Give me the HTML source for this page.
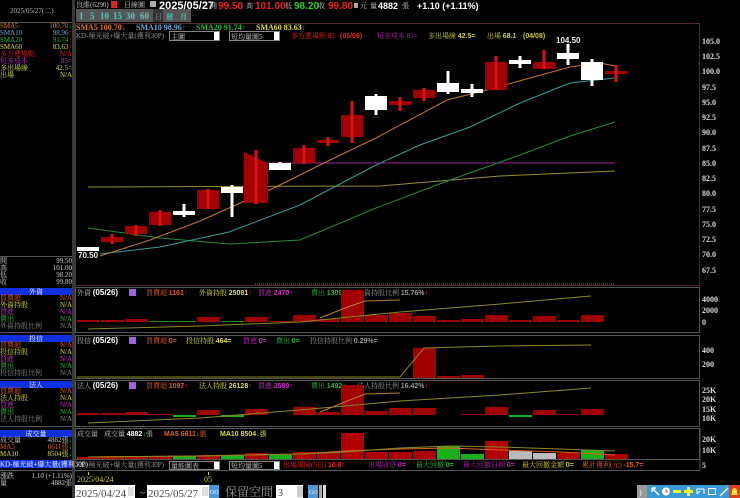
<!DOCTYPE html>
<html><head><meta charset="utf-8"><style>
html,body{margin:0;padding:0;background:#000;width:740px;height:498px;overflow:hidden}
svg{display:block}
text{font-family:"Liberation Serif","Noto Serif CJK SC","Noto Sans CJK TC",serif}
.b{font-family:"Liberation Sans","Noto Sans CJK TC",sans-serif;font-weight:bold}
</style></head><body>
<svg width="740" height="498" viewBox="0 0 740 498" xmlns="http://www.w3.org/2000/svg">
<rect width="740" height="498" fill="#000"/>
<rect x="72" y="0" width="3" height="498" fill="#3a3a3a"/>
<line x1="0" y1="22.5" x2="72" y2="22.5" stroke="#555"/>
<text x="10" y="13" font-size="7" fill="#bbb">2025/05/27(二)</text>
<g font-size="7">
<text x="0" y="28" fill="#e07a20">SMA5</text><text x="72" y="28" fill="#e07a20" text-anchor="end">100.70<tspan fill="#2c2">↓</tspan></text>
<text x="0" y="35" fill="#6ac">SMA10</text><text x="72" y="35" fill="#6ac" text-anchor="end">98.96<tspan fill="#f22">↑</tspan></text>
<text x="0" y="42" fill="#2b4">SMA20</text><text x="72" y="42" fill="#2b4" text-anchor="end">91.74<tspan fill="#f22">↑</tspan></text>
<text x="0" y="49" fill="#dd3">SMA60</text><text x="72" y="49" fill="#dd3" text-anchor="end">83.63<tspan fill="#f22">↑</tspan></text>
<text x="0" y="56" fill="#e22">多方進場點</text><text x="72" y="56" fill="#e22" text-anchor="end">N/A</text>
<text x="0" y="63" fill="#c3c">短多成本</text><text x="72" y="63" fill="#c3c" text-anchor="end">85=</text>
<text x="0" y="70" fill="#dd3">多出場線</text><text x="72" y="70" fill="#dd3" text-anchor="end">42.5=</text>
<text x="0" y="77" fill="#dd3">出場</text><text x="72" y="77" fill="#dd3" text-anchor="end">N/A</text>
</g>
<line x1="0" y1="256.5" x2="72" y2="256.5" stroke="#555"/>
<g font-size="7" fill="#ccc">
<text x="0" y="263">開</text><text x="72" y="263" text-anchor="end">99.50</text>
<text x="0" y="270">高</text><text x="72" y="270" text-anchor="end">101.00</text>
<text x="0" y="277">低</text><text x="72" y="277" text-anchor="end">98.20</text>
<text x="0" y="284">收</text><text x="72" y="284" text-anchor="end">99.80</text>
</g>
<g font-size="7">
<rect x="0" y="288" width="72" height="7" fill="#1030e0"/><text x="36" y="294" fill="#fff" text-anchor="middle">外資</text>
<text x="0" y="300" fill="#e06020">買賣超</text><text x="72" y="300" fill="#e06020" text-anchor="end">N/A</text>
<text x="0" y="307" fill="#dd3">外資持股</text><text x="72" y="307" fill="#dd3" text-anchor="end">N/A</text>
<text x="0" y="314" fill="#c3c">買進</text><text x="72" y="314" fill="#c3c" text-anchor="end">N/A</text>
<text x="0" y="321" fill="#2b4">賣出</text><text x="72" y="321" fill="#2b4" text-anchor="end">N/A</text>
<text x="0" y="328" fill="#888">外資持股比例</text><text x="72" y="328" fill="#888" text-anchor="end">N/A</text>
<line x1="0" y1="332.5" x2="72" y2="332.5" stroke="#555"/>
<rect x="0" y="335" width="72" height="7" fill="#1030e0"/><text x="36" y="341" fill="#fff" text-anchor="middle">投信</text>
<text x="0" y="347" fill="#e06020">買賣超</text><text x="72" y="347" fill="#e06020" text-anchor="end">N/A</text>
<text x="0" y="354" fill="#dd3">投信持股</text><text x="72" y="354" fill="#dd3" text-anchor="end">N/A</text>
<text x="0" y="361" fill="#c3c">買進</text><text x="72" y="361" fill="#c3c" text-anchor="end">N/A</text>
<text x="0" y="368" fill="#2b4">賣出</text><text x="72" y="368" fill="#2b4" text-anchor="end">N/A</text>
<text x="0" y="375" fill="#888">投信持股比例</text><text x="72" y="375" fill="#888" text-anchor="end">N/A</text>
<line x1="0" y1="379.5" x2="72" y2="379.5" stroke="#555"/>
<rect x="0" y="381" width="72" height="7" fill="#1030e0"/><text x="36" y="387" fill="#fff" text-anchor="middle">法人</text>
<text x="0" y="393" fill="#e06020">買賣超</text><text x="72" y="393" fill="#e06020" text-anchor="end">N/A</text>
<text x="0" y="400" fill="#dd3">法人持股</text><text x="72" y="400" fill="#dd3" text-anchor="end">N/A</text>
<text x="0" y="407" fill="#c3c">買進</text><text x="72" y="407" fill="#c3c" text-anchor="end">N/A</text>
<text x="0" y="414" fill="#2b4">賣出</text><text x="72" y="414" fill="#2b4" text-anchor="end">N/A</text>
<text x="0" y="421" fill="#888">法人持股比例</text><text x="72" y="421" fill="#888" text-anchor="end">N/A</text>
<line x1="0" y1="426.5" x2="72" y2="426.5" stroke="#555"/>
<rect x="0" y="430" width="72" height="7" fill="#1030e0"/><text x="36" y="436" fill="#fff" text-anchor="middle">成交量</text>
<text x="0" y="442" fill="#ccc">成交量</text><text x="72" y="442" fill="#ccc" text-anchor="end">4882張<tspan fill="#2c2">↓</tspan></text>
<text x="0" y="449" fill="#e06020">MA5</text><text x="72" y="449" fill="#e06020" text-anchor="end">6611張<tspan fill="#2c2">↓</tspan></text>
<text x="0" y="456" fill="#dd3">MA10</text><text x="72" y="456" fill="#dd3" text-anchor="end">8504張<tspan fill="#2c2">↓</tspan></text>
<rect x="0" y="460" width="72" height="8" fill="#1030e0"/><text x="0" y="466.5" fill="#fff">KD-極光破+爆大量(獲利30P)</text>
<line x1="0" y1="470.5" x2="72" y2="470.5" stroke="#555"/>
<text x="0" y="478" fill="#ccc">漲跌</text><text x="72" y="478" fill="#ccc" text-anchor="end">1.10 (+1.11%)</text>
<text x="0" y="485" fill="#ccc">量</text><text x="72" y="485" fill="#ccc" text-anchor="end">4882張</text>
</g>

<g font-size="7" fill="#ccc">
<text x="76" y="7">良維(6290)</text>
<rect x="111" y="1" width="6" height="7" fill="#d22"/>
<text x="124" y="7">日線圖</text>
<rect x="150" y="1" width="6" height="6" fill="#aaa"/>
<text x="159" y="9" class="b" font-size="11" fill="#fff">2025/05/27</text>
<text x="210" y="8">開</text><text x="218" y="9" class="b" font-size="10" fill="#e22">99.50</text>
<text x="246" y="8">高</text><text x="255" y="9" class="b" font-size="10" fill="#e22">101.00</text>
<text x="285" y="8">低</text><text x="294" y="9" class="b" font-size="10" fill="#2c2">98.20</text>
<text x="318" y="8">收</text><text x="328" y="9" class="b" font-size="10" fill="#e22">99.80</text>
<rect x="354" y="3" width="4" height="5" fill="#aaa"/><text x="360" y="8">元</text>
<text x="370" y="8">量</text><text x="378" y="9" class="b" font-size="9" fill="#fff">4882</text><text x="402" y="8">張</text>
<text x="417" y="9" class="b" font-size="9" fill="#fff">+1.10 (+1.11%)</text>
</g>
<g font-size="9" class="b">
<rect x="76" y="9" width="115" height="13" fill="#555"/>
<g fill="#4cc">
<text x="79" y="19">1</text><text x="90" y="19">5</text><text x="100" y="19">10</text><text x="113" y="19">15</text><text x="126" y="19">30</text><text x="140" y="19">60</text>
</g>
<rect x="153" y="9" width="10" height="13" fill="#333"/><text x="155" y="19" fill="#777" font-size="7">日</text>
<text x="166" y="19" fill="#4cc" font-size="7">週</text><text x="180" y="19" fill="#4cc" font-size="7">月</text>
</g>

<rect x="75.5" y="23.5" width="624" height="262" fill="none" stroke="#5a2a2a"/>
<g font-size="8" class="b">
<text x="76" y="30" fill="#e07a20">SMA5 100.70<tspan fill="#2c2">↓</tspan></text>
<text x="136" y="30" fill="#6ac">SMA10 98.96<tspan fill="#f22">↑</tspan></text>
<text x="196" y="30" fill="#2b4">SMA20 91.74<tspan fill="#f22">↑</tspan></text>
<text x="256" y="30" fill="#dd3">SMA60 83.63<tspan fill="#f22">↑</tspan></text>
</g>
<g font-size="7">
<text x="76" y="38" fill="#999">KD-極光破+爆大量(獲利30P)</text>
<rect x="169.5" y="31.5" width="50" height="9" fill="#000" stroke="#888"/><text x="171" y="39" fill="#ccc">主圖</text>
<rect x="214" y="32" width="5" height="8" fill="#fff"/>
<rect x="229.5" y="31.5" width="50" height="9" fill="#000" stroke="#888"/><text x="231" y="39" fill="#ccc">短均量圖5</text>
<rect x="274" y="32" width="5" height="8" fill="#fff"/>
<text x="291" y="38" fill="#e22">多方進場點 85</text>
<text x="340" y="38" fill="#e22" class="b">(05/06)</text>
<text x="377" y="38" fill="#b2b">短多成本 85=</text>
<text x="428" y="38" fill="#cc3">多出場線 <tspan class="b">42.5=</tspan></text>
<text x="487" y="38" fill="#cc3">出場 <tspan class="b">68.1</tspan></text>
<text x="523" y="38" fill="#cc3" class="b">(04/08)</text>
<text x="556" y="43" fill="#eee" class="b" font-size="8">104.50</text>
<text x="78" y="258" fill="#eee" class="b" font-size="8">70.50</text>
</g>
<g font-size="8" class="b" fill="#ddd">
<text x="702" y="44">105.0</text><text x="702" y="59">102.5</text><text x="702" y="74">100.0</text><text x="702" y="90">97.5</text>
<text x="702" y="105">95.0</text><text x="702" y="120">92.5</text><text x="702" y="135">90.0</text><text x="702" y="151">87.5</text>
<text x="702" y="166">85.0</text><text x="702" y="181">82.5</text><text x="702" y="196">80.0</text><text x="702" y="212">77.5</text>
<text x="702" y="227">75.0</text><text x="702" y="242">72.5</text><text x="702" y="257">70.0</text><text x="702" y="273">67.5</text>
</g>
<g fill="none" stroke-width="1">
<polyline stroke="#99902a" points="88,187 380,186 500,176 615,171"/>
<polyline stroke="#a020a0" points="269,163 615,163"/>
<polyline stroke="#2a8a3a" points="88,228 160,238 230,244 300,240 376,208 450,180 520,155 570,136 615,122"/>
<polyline stroke="#3a9a9a" points="100,254 160,247 229,232 300,205 376,165 420,145 470,127 520,103 570,83 615,78"/>
<polyline stroke="#c07a28" points="100,256 150,240 200,221 276,187 330,160 376,138 447,100 487,90 530,78 570,67 600,63 615,66"/>
</g>
<line x1="255" y1="284" x2="615" y2="284" stroke="#777" stroke-dasharray="1,1"/>
<g>
<g fill="#a00000">
<rect x="101" y="237" width="22" height="5"/><rect x="125" y="226" width="22" height="8"/><rect x="149" y="212" width="22" height="13"/>
<rect x="197" y="190" width="22" height="19"/><polygon points="244,152 268,163 268,203 244,203"/>
<rect x="293" y="148" width="22" height="15"/><rect x="317" y="140" width="22" height="3"/><rect x="341" y="115" width="22" height="22"/>
<rect x="389" y="101" width="22" height="4"/><rect x="413" y="90" width="22" height="8"/><rect x="485" y="62" width="22" height="28"/>
<rect x="533" y="62" width="22" height="7"/><rect x="605" y="71" width="22" height="3"/>
</g>
<g fill="#e01010">
<rect x="110.5" y="234" width="3" height="10"/><rect x="134.5" y="225" width="3" height="11"/><rect x="158.5" y="210" width="3" height="16"/>
<rect x="206.5" y="189" width="3" height="20"/><rect x="254.5" y="150" width="3" height="54"/><rect x="302.5" y="145" width="3" height="19"/>
<rect x="326.5" y="137" width="3" height="9"/><rect x="350.5" y="101" width="3" height="42"/><rect x="398.5" y="97" width="3" height="14"/>
<rect x="422.5" y="88" width="3" height="13"/><rect x="494.5" y="56" width="3" height="34"/><rect x="542.5" y="50" width="3" height="19"/>
<rect x="614.5" y="65" width="3" height="17"/>
<rect x="101" y="238.5" width="22" height="2" fill="#a00000"/>
</g>
<g fill="#fff">
<rect x="77" y="247" width="22" height="4"/>
<rect x="173" y="211" width="22" height="4"/><rect x="182.5" y="204" width="3" height="13"/>
<rect x="221" y="187" width="22" height="6"/><rect x="230.5" y="185" width="3" height="32"/>
<rect x="269" y="163" width="22" height="7"/><rect x="278.5" y="162" width="3" height="8"/>
<rect x="365" y="96" width="22" height="14"/><rect x="374.5" y="94" width="3" height="21"/>
<rect x="437" y="83" width="22" height="9"/><rect x="446.5" y="71" width="3" height="23"/>
<rect x="461" y="89" width="22" height="4"/><rect x="470.5" y="84" width="3" height="13"/>
<rect x="509" y="60" width="22" height="4"/><rect x="518.5" y="56" width="3" height="12"/>
<rect x="557" y="53" width="22" height="6"/><rect x="566.5" y="44" width="3" height="21"/>
<rect x="581" y="62" width="22" height="18"/><rect x="590.5" y="59" width="3" height="27"/>
</g>
</g>

<g fill="none" stroke="#555">
<rect x="75.5" y="287.5" width="624" height="45"/>
<rect x="75.5" y="335.5" width="624" height="43"/>
<rect x="75.5" y="380.5" width="624" height="46"/>
<rect x="75.5" y="428.5" width="624" height="31"/>
</g>
<g font-size="7">
<text x="77" y="295" fill="#bbb">外資 <tspan class="b" font-size="8" fill="#fff">(05/26)</tspan></text>
<rect x="129" y="289" width="7" height="7" fill="#a060e0"/>
<text x="146" y="295" fill="#e06020">買賣超 <tspan class="b">1161</tspan><tspan fill="#f22">↑</tspan></text>
<text x="199" y="295" fill="#dd3">外資持股 <tspan class="b">25081</tspan><tspan fill="#f22">↑</tspan></text>
<text x="258" y="295" fill="#c3c">買進 <tspan class="b">2470</tspan><tspan fill="#f22">↑</tspan></text>
<text x="311" y="295" fill="#2b4">賣出 <tspan class="b">1309</tspan><tspan fill="#2c2">↓</tspan></text>
<text x="357" y="295" fill="#999">外資持股比例 <tspan class="b">15.76%</tspan><tspan fill="#f22">↑</tspan></text>

<text x="77" y="343" fill="#bbb">投信 <tspan class="b" font-size="8" fill="#fff">(05/26)</tspan></text>
<rect x="129" y="337" width="7" height="7" fill="#a060e0"/>
<text x="146" y="343" fill="#e06020">買賣超 <tspan class="b">0=</tspan></text>
<text x="186" y="343" fill="#dd3">投信持股 <tspan class="b">464=</tspan></text>
<text x="243" y="343" fill="#c3c">買進 <tspan class="b">0=</tspan></text>
<text x="276" y="343" fill="#2b4">賣出 <tspan class="b">0=</tspan></text>
<text x="310" y="343" fill="#999">投信持股比例 <tspan class="b">0.29%=</tspan></text>

<text x="77" y="388" fill="#bbb">法人 <tspan class="b" font-size="8" fill="#fff">(05/26)</tspan></text>
<rect x="129" y="382" width="7" height="7" fill="#a060e0"/>
<text x="146" y="388" fill="#e06020">買賣超 <tspan class="b">1097</tspan><tspan fill="#f22">↑</tspan></text>
<text x="199" y="388" fill="#dd3">法人持股 <tspan class="b">26128</tspan><tspan fill="#f22">↑</tspan></text>
<text x="258" y="388" fill="#c3c">買進 <tspan class="b">2589</tspan><tspan fill="#f22">↑</tspan></text>
<text x="311" y="388" fill="#2b4">賣出 <tspan class="b">1492</tspan><tspan fill="#2c2">↓</tspan></text>
<text x="357" y="388" fill="#999">法人持股比例 <tspan class="b">16.42%</tspan><tspan fill="#f22">↑</tspan></text>

<text x="77" y="436" fill="#bbb">成交量</text>
<text x="104" y="436" fill="#ccc">成交量 <tspan class="b" fill="#fff">4882</tspan><tspan fill="#2c2">↓</tspan>張</text>
<text x="164" y="436" fill="#e06020" class="b">MA5 6611<tspan fill="#2c2">↓</tspan><tspan font-weight="normal">張</tspan></text>
<text x="220" y="436" fill="#dd3" class="b">MA10 8504<tspan fill="#2c2">↓</tspan><tspan font-weight="normal">張</tspan></text>
</g>
<g font-size="8" class="b" fill="#ddd">
<text x="702" y="302">4000</text><text x="702" y="313">2000</text><text x="702" y="325">0</text>
<text x="702" y="353">400</text><text x="702" y="367">200</text>
<text x="702" y="393">25K</text><text x="702" y="402">20K</text><text x="702" y="412">15K</text><text x="702" y="421">10K</text>
<text x="702" y="442">20K</text><text x="702" y="453">10K</text><text x="702" y="468">5</text>
</g>
<g fill="#a00000">
<rect x="77" y="320" width="23" height="2"/><rect x="101" y="320" width="23" height="2"/><rect x="125" y="319" width="23" height="3"/>
<rect x="197" y="317" width="23" height="5"/><rect x="245" y="317" width="23" height="5"/><rect x="269" y="321" width="23" height="1"/>
<rect x="293" y="315" width="23" height="7"/><rect x="317" y="319" width="23" height="3"/><rect x="341" y="290" width="23" height="32"/>
<rect x="365" y="315" width="23" height="7"/><rect x="389" y="313" width="23" height="9"/><rect x="413" y="316" width="23" height="6"/>
<rect x="437" y="320" width="23" height="2"/><rect x="461" y="319" width="23" height="3"/><rect x="485" y="315" width="23" height="7"/>
<rect x="509" y="320" width="23" height="2"/><rect x="533" y="316" width="23" height="6"/><rect x="557" y="320" width="23" height="2"/><rect x="581" y="315" width="23" height="7"/>
</g>
<g fill="#1a8a1a"><rect x="149" y="321" width="47" height="1"/><rect x="221" y="321" width="23" height="1"/></g>
<polyline fill="none" stroke="#8a8a20" points="88,329 200,326 300,322 400,312 500,304 591,296"/>
<polyline fill="none" stroke="#c07a28" points="320,318 345,308 365,301 400,300"/>
<g fill="#a00000"><rect x="413" y="348" width="23" height="30"/><rect x="437" y="376" width="23" height="2"/><rect x="461" y="375" width="23" height="3"/></g>
<polyline fill="none" stroke="#8a8a20" points="77,377 400,377 424,348 500,346 591,345"/>
<g fill="#a00000">
<rect x="77" y="413" width="23" height="2"/><rect x="101" y="413" width="23" height="2"/><rect x="125" y="412" width="23" height="3"/><rect x="149" y="414" width="23" height="1"/>
<rect x="197" y="410" width="23" height="5"/><rect x="245" y="409" width="23" height="6"/><rect x="293" y="407" width="23" height="8"/>
<rect x="317" y="412" width="23" height="3"/><rect x="341" y="385" width="23" height="30"/><rect x="365" y="411" width="23" height="4"/>
<rect x="389" y="408" width="23" height="7"/><rect x="413" y="408" width="23" height="7"/><rect x="461" y="414" width="23" height="1"/>
<rect x="485" y="407" width="23" height="8"/><rect x="533" y="410" width="23" height="5"/><rect x="557" y="414" width="23" height="1"/><rect x="581" y="409" width="23" height="6"/>
</g>
<g fill="#1ab01a"><rect x="173" y="415" width="23" height="2"/><rect x="221" y="415" width="23" height="2"/><rect x="509" y="415" width="23" height="2"/></g>
<polyline fill="none" stroke="#8a8a20" points="88,423 200,418 300,410 400,401 500,395 591,388"/>
<polyline fill="none" stroke="#c07a28" points="320,412 345,402 365,394 400,393"/>
<g fill="#b00000">
<rect x="77" y="457" width="23" height="2"/><rect x="101" y="456" width="23" height="3"/><rect x="125" y="457" width="23" height="2"/><rect x="149" y="457" width="23" height="2"/>
<rect x="197" y="455" width="23" height="4"/><rect x="245" y="453" width="23" height="6"/><rect x="293" y="452" width="23" height="7"/>
<rect x="317" y="452" width="23" height="7"/><rect x="341" y="433" width="23" height="26"/><rect x="365" y="452" width="23" height="7"/>
<rect x="389" y="452" width="23" height="7"/><rect x="413" y="451" width="23" height="8"/><rect x="485" y="441" width="23" height="18"/>
<rect x="557" y="453" width="23" height="6"/><rect x="605" y="454" width="23" height="5"/>
</g>
<g fill="#1ab01a"><rect x="173" y="456" width="23" height="3"/><rect x="221" y="455" width="23" height="4"/><rect x="269" y="455" width="23" height="4"/><rect x="437" y="446" width="23" height="13"/><rect x="461" y="454" width="23" height="5"/><rect x="581" y="450" width="23" height="9"/></g>
<g fill="#bbb"><rect x="509" y="451" width="23" height="8"/><rect x="533" y="453" width="23" height="6"/></g>
<polyline fill="none" stroke="#e06020" points="88,457 200,456 300,454 345,451 400,449 450,448 500,450 560,452 615,455"/>
<polyline fill="none" stroke="#8a8a20" points="88,457 200,456 300,454 345,452 400,448 450,446 500,447 560,449 615,451"/>

<g font-size="7">
<text x="76" y="467" fill="#999">KD-極光破+爆大量(獲利30P)</text>
<rect x="169.5" y="461.5" width="50" height="8" fill="#000" stroke="#888"/><text x="171" y="468" fill="#ccc">量能圖表</text><rect x="214" y="462" width="5" height="7" fill="#fff"/>
<rect x="229.5" y="461.5" width="50" height="8" fill="#000" stroke="#888"/><text x="231" y="468" fill="#ccc">短均量圖5</text><rect x="274" y="462" width="5" height="7" fill="#fff"/>
<text x="283" y="467" fill="#e22">出場風險(5日) <tspan class="b">10.8</tspan>↑</text>
<text x="368" y="467" fill="#b2b">出場訊息 <tspan class="b">0=</tspan></text>
<text x="416" y="467" fill="#2b4">最大回撤 <tspan class="b">0=</tspan></text>
<text x="463" y="467" fill="#b2b">最大回撤日期 <tspan class="b">0=</tspan></text>
<text x="522" y="467" fill="#cc3">最大回撤金額 <tspan class="b">0=</tspan></text>
<text x="582" y="467" fill="#e06020">累計獲利(元) <tspan class="b">-15.7=</tspan></text>
</g>
<line x1="75" y1="470.5" x2="700" y2="470.5" stroke="#555"/>
<line x1="700" y1="428" x2="700" y2="470" stroke="#555"/>
<line x1="88.5" y1="472" x2="88.5" y2="475" stroke="#cc3"/><line x1="208.5" y1="472" x2="208.5" y2="475" stroke="#cc3"/>
<text x="77" y="482" font-size="8" fill="#cc3">2025/04/24</text>
<text x="204" y="482" font-size="8" fill="#cc3">05</text>
<rect x="75" y="485" width="60" height="13" fill="#fff"/>
<text x="76" y="497" font-size="11" fill="#444">2025/04/24</text><rect x="128" y="487" width="6" height="9" fill="#ddd"/>
<text x="140" y="496" font-size="9" fill="#ccc">~</text>
<rect x="147" y="485" width="62" height="13" fill="#fff"/>
<text x="148" y="497" font-size="11" fill="#444">2025/05/27</text><rect x="202" y="487" width="6" height="9" fill="#ddd"/>
<rect x="209" y="485" width="10" height="13" fill="#4a9ad8"/><text x="210" y="494" font-size="6" fill="#fff">GO</text>
<text x="225" y="496" font-size="12" fill="#999">保留空間</text>
<rect x="276" y="485" width="27" height="13" fill="#fff"/><text x="278" y="496" font-size="10" fill="#333">3</text>
<rect x="297" y="486" width="6" height="11" fill="#ccc"/>
<rect x="308" y="485" width="10" height="13" fill="#4a9ad8"/><text x="309" y="494" font-size="6" fill="#fff">GO</text>
<rect x="319" y="485" width="3" height="13" fill="#aaa"/><rect x="323" y="485" width="3" height="13" fill="#ddd"/>
<rect x="637" y="485" width="103" height="13" fill="#3a9ad8"/>
<rect x="637" y="485" width="10" height="13" fill="#999"/><text x="639" y="495" font-size="8" fill="#fff">)</text>
<path d="M652 488 L659 495 M652 488 L652 492 M652 488 L656 488" stroke="#fff" stroke-width="1.5" fill="none"/>
<circle cx="666" cy="491.5" r="4" fill="#fff"/><path d="M666 489 L666 492 L668 492" stroke="#e44" fill="none"/>
<rect x="673" y="490" width="8" height="3" fill="#ee3"/>
<rect x="684" y="490" width="9" height="3" fill="#ee3"/><rect x="687" y="487" width="3" height="9" fill="#ee3"/>
<path d="M697 494 L697 489 L704 489 L704 494 M697 494 L700 491" stroke="#fff" fill="none"/>
<rect x="708.5" y="488.5" width="7" height="6" fill="none" stroke="#fff"/>
<path d="M720 496 L728 488" stroke="#fff" stroke-width="1.5"/>
<rect x="729" y="485" width="11" height="13" fill="#e04020"/>
<path d="M731 495 L738 495 L737 493 L737 490 Q734.5 486 732 490 L732 493 Z" fill="#fd3"/>
</svg>
</body></html>
